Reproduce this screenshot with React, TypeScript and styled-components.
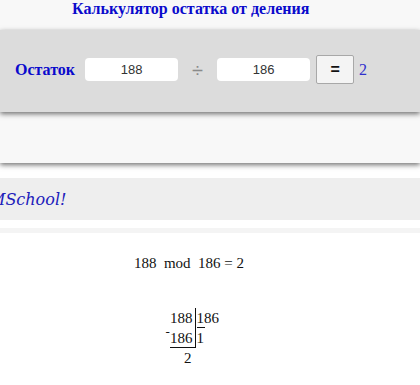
import styled, { createGlobalStyle } from 'styled-components';

const GlobalStyle = createGlobalStyle`
  html, body {
    margin: 0;
    padding: 0;
    background: #ffffff;
    overflow: hidden;
  }
`;

const Page = styled.div`
  width: 420px;
  height: 385px;
  overflow: hidden;
`;

const Header = styled.div`
  height: 30px;
  background: #f8f8f8;
  padding-left: 72px;
  box-sizing: border-box;
`;

const Title = styled.h1`
  margin: 0;
  font-family: "Liberation Serif", serif;
  font-weight: bold;
  font-size: 16px;
  line-height: 17px;
  color: #0a0acc;
`;

const CalcPanel = styled.div`
  position: relative;
  z-index: 2;
  height: 82px;
  box-sizing: border-box;
  padding: 0 0 3px 15px;
  background: #dcdcdc;
  display: flex;
  align-items: center;
  box-shadow: 0 2px 5px rgba(0, 0, 0, 0.55);
`;

const Label = styled.span`
  font-family: "Liberation Serif", serif;
  font-weight: bold;
  font-size: 16px;
  color: #0a0acc;
  margin-right: 10px;
`;

const NumberInput = styled.input`
  width: 93px;
  height: 23px;
  box-sizing: border-box;
  border: none;
  border-radius: 4px;
  background: #ffffff;
  font-family: "Liberation Sans", Arial, sans-serif;
  font-size: 13px;
  color: #333;
  text-align: center;
  outline: none;
  padding: 0;
`;

const Divide = styled.span`
  font-family: "Liberation Sans", Arial, sans-serif;
  font-size: 20px;
  line-height: 20px;
  color: #8a8a8a;
  margin: 0 14px 0 14px;
`;

const EqualsButton = styled.button`
  width: 38px;
  height: 29px;
  margin-left: 6px;
  box-sizing: border-box;
  border: 1px solid #a8a8a8;
  border-radius: 2px;
  background: #f4f4f4;
  font-family: "Liberation Sans", Arial, sans-serif;
  font-weight: bold;
  font-size: 16px;
  color: #111;
  padding: 0;
  cursor: pointer;
`;

const Result = styled.span`
  font-family: "Liberation Serif", serif;
  font-size: 16px;
  color: #3030cc;
  margin-left: 5px;
`;

const LightBand = styled.div`
  position: relative;
  z-index: 1;
  height: 51px;
  background: #f8f8f8;
  box-shadow: 0 2px 5px rgba(0, 0, 0, 0.55);
`;

const Banner = styled.div`
  margin-top: 15px;
  height: 42px;
  background: #eeeeee;
  display: flex;
  align-items: center;
  overflow: hidden;
`;

const BannerText = styled.span`
  margin-left: -11px;
  font-family: "DejaVu Serif", serif;
  font-style: italic;
  font-size: 16px;
  color: #2020bb;
  white-space: nowrap;
`;

const Strip = styled.div`
  margin-top: 8px;
  height: 5px;
  background: #f4f4f4;
`;

const Content = styled.div`
  padding: 22px 42px 0 0;
  text-align: center;
  font-family: "Liberation Serif", serif;
  font-size: 15px;
  color: #111;
`;

const Formula = styled.div`
  line-height: 17px;
  white-space: pre;
`;

const Division = styled.div`
  display: inline-grid;
  grid-template-columns: 4px 26px 23px;
  grid-auto-rows: 20px;
  margin-top: 36px;
  margin-left: 6px;
  line-height: 20px;
  text-align: left;
`;

const Minus = styled.span`
  font-size: 13px;
  line-height: 8px;
  align-self: start;
`;

const LeftCell = styled.span<{ $underline?: boolean; $bar?: boolean; $pad?: number }>`
  text-align: right;
  padding-right: ${(p) => p.$pad ?? 2}px;
  border-right: ${(p) => (p.$bar ? '1px solid #111' : '1px solid transparent')};
  border-bottom: ${(p) => (p.$underline ? '1px solid #111' : 'none')};
  box-sizing: border-box;
`;

const RightCell = styled.span`
  padding-left: 1px;
`;

const DivisorLine = styled.span`
  display: block;
  width: 8px;
  height: 20px;
  box-sizing: border-box;
  border-bottom: 1px solid #111;
  margin-top: -20px;
  pointer-events: none;
`;

export default function App() {
  return (
    <Page>
      <GlobalStyle />
      <Header>
        <Title>Калькулятор остатка от деления</Title>
      </Header>
      <CalcPanel>
        <Label>Остаток</Label>
        <NumberInput defaultValue="188" />
        <Divide>÷</Divide>
        <NumberInput defaultValue="186" />
        <EqualsButton>=</EqualsButton>
        <Result>2</Result>
      </CalcPanel>
      <LightBand />
      <Banner>
        <BannerText>MSchool!</BannerText>
      </Banner>
      <Strip />
      <Content>
        <Formula>188  mod  186 = 2</Formula>
        <Division>
          <span />
          <LeftCell $bar>188</LeftCell>
          <RightCell>
            186
            <DivisorLine />
          </RightCell>
          <Minus>-</Minus>
          <LeftCell $bar $underline>186</LeftCell>
          <RightCell>1</RightCell>
          <span />
          <LeftCell $pad={3}>2</LeftCell>
          <span />
        </Division>
      </Content>
    </Page>
  );
}
